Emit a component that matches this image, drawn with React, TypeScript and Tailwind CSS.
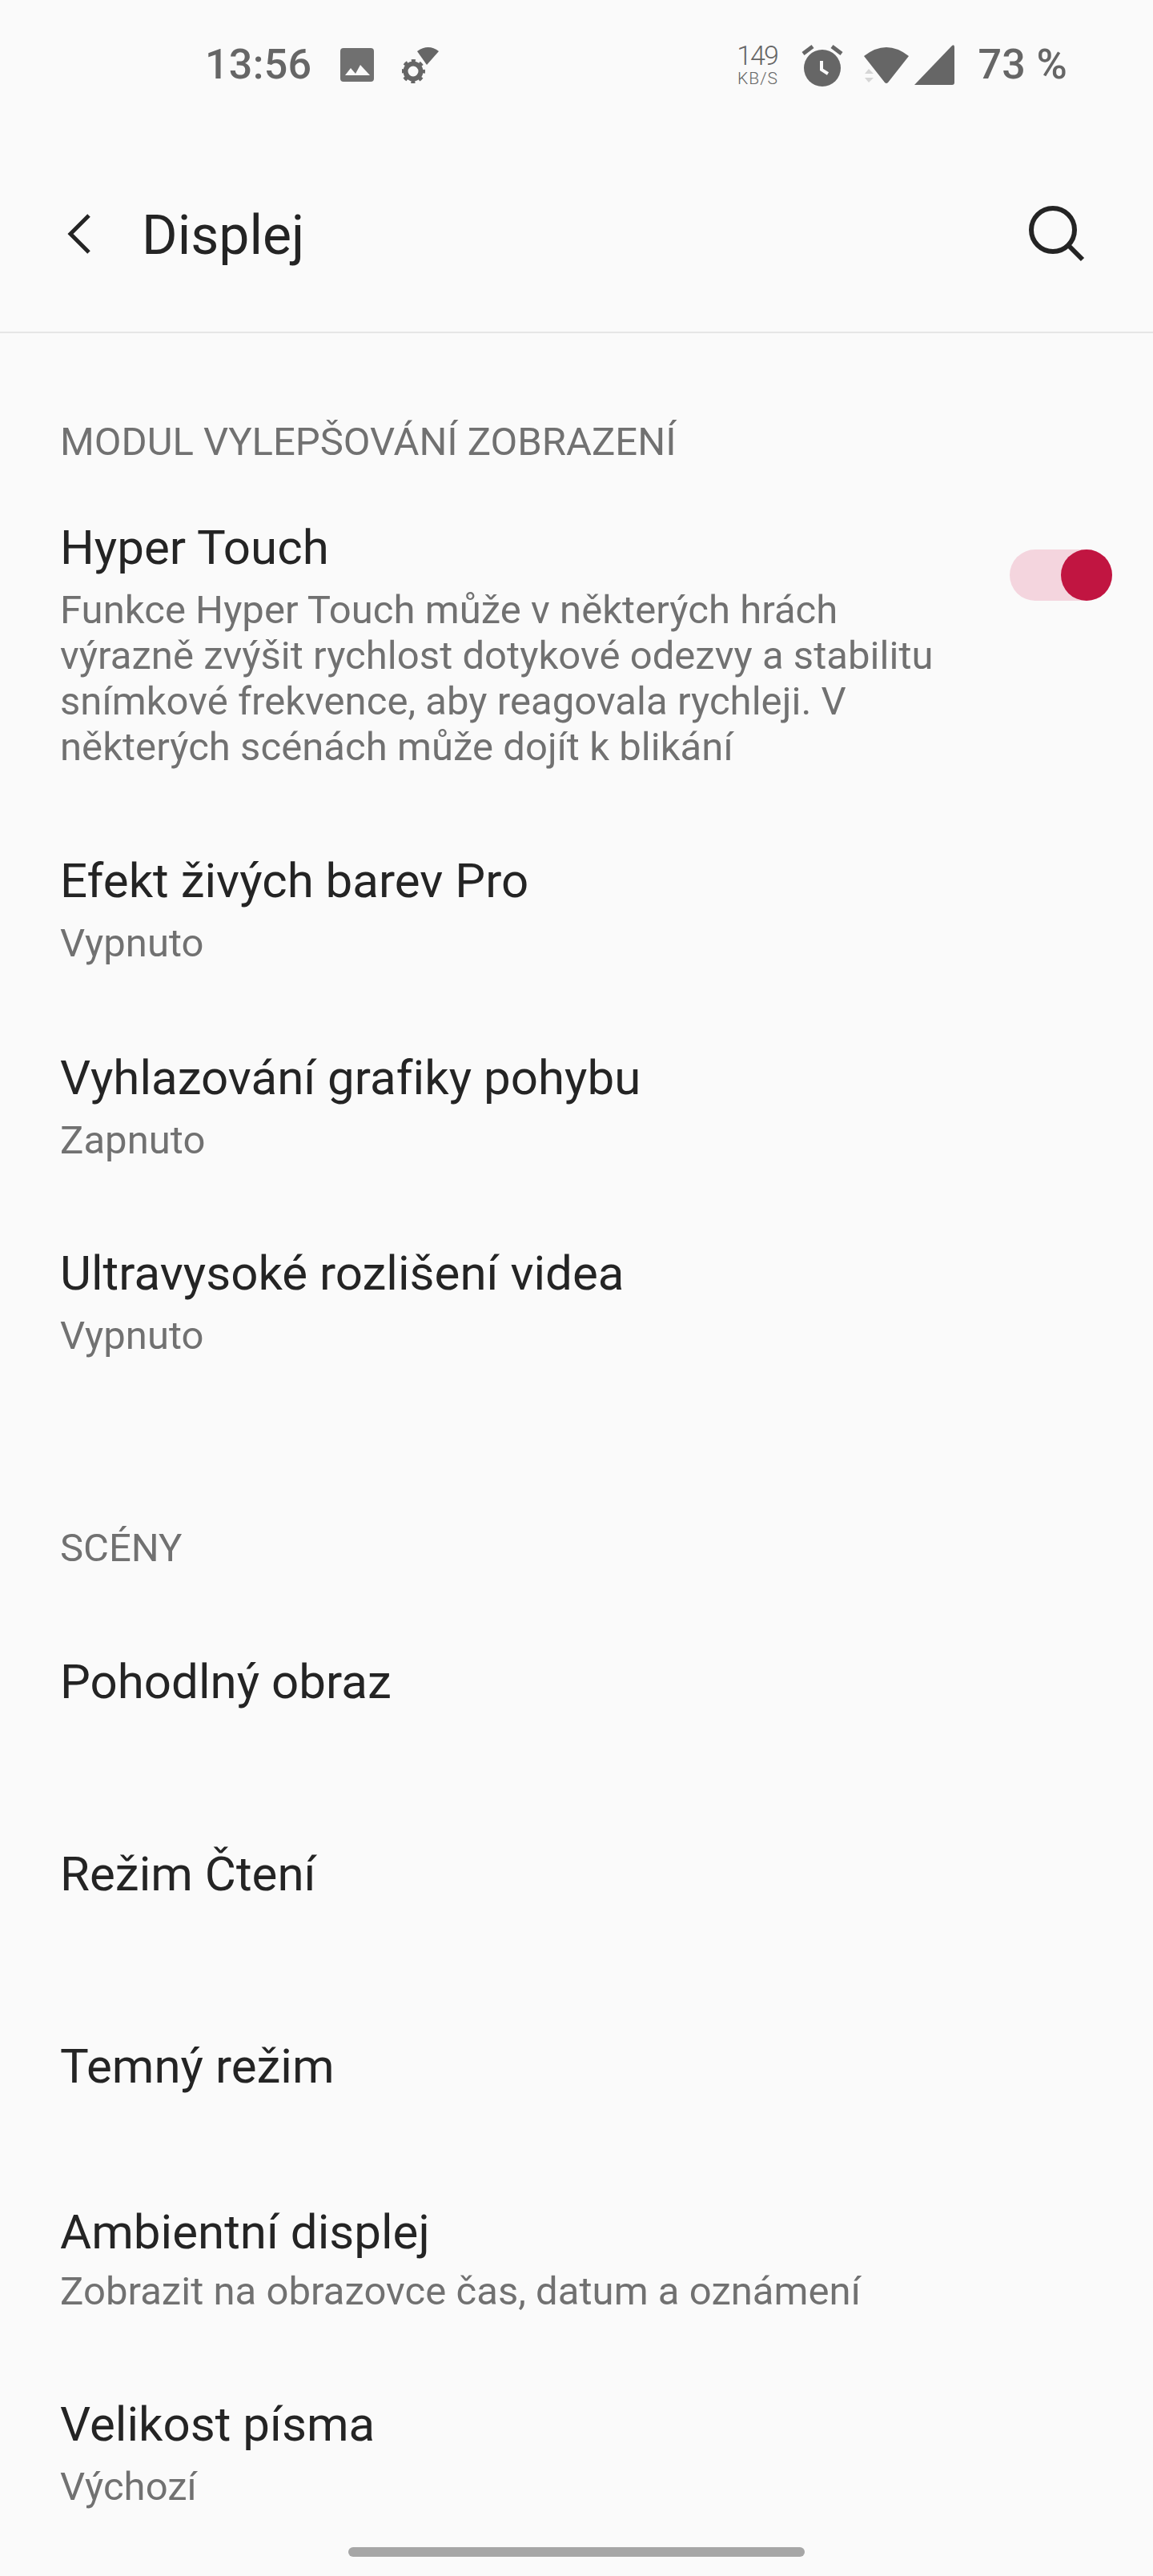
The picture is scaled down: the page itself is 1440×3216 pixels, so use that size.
import React from "react";

function Row({ title, sub, className, subClass = "mt-[13px]" }: { title: string; sub?: string; className: string; subClass?: string }) {
  return (
    <div className={className}>
      <div className="text-[60px] leading-[72px] tracking-[0.03px] text-[#242424]">{title}</div>
      {sub && <div className={`text-[49px] leading-[57px] tracking-[0.05px] text-[#717171] ${subClass}`}>{sub}</div>}
    </div>
  );
}

function Heading({ children, className }: { children: React.ReactNode; className: string }) {
  return <div className={`text-[49px] leading-[57px] text-[#717171] ${className}`}>{children}</div>;
}

export default function App() {
  return (
    <div className="relative w-[1440px] h-[3216px] overflow-hidden bg-[#fafafa] font-['Roboto',sans-serif]">
      {/* status bar */}
      <div className="flex h-[162px] items-center justify-between pl-[256px] pr-[107px] text-[#666666]">
        <div className="flex items-center">
          <span className="text-[52px] font-medium leading-none tracking-[0.3px]">13:56</span>
          <svg className="ml-[36px]" width="42" height="42" viewBox="0 0 42 42">
            <rect width="42" height="42" rx="4" fill="#707070" />
            <path d="M6 34 L13 25 L19 32 L25 21 L37 34 Z" fill="#fafafa" />
          </svg>
          <svg className="ml-[35px]" width="48" height="46" viewBox="0 0 48 46">
            <path d="M19 6 Q33 -4 46 6 L31 23 Z" fill="#666666" />
            <circle cx="14" cy="31" r="9.5" fill="none" stroke="#666666" strokeWidth="6" />
            <circle cx="14" cy="31" r="13" fill="none" stroke="#666666" strokeWidth="4" strokeDasharray="5 5.2" strokeDashoffset="2.5" />
          </svg>
        </div>
        <div className="flex items-center">
          <div className="flex w-[52px] flex-col items-center text-[#666666]">
            <span className="text-[34px] font-light leading-[34px] tracking-[-2px]">149</span>
            <span className="pl-[2px] text-[21px] font-light leading-[24px] tracking-[1px]">KB/S</span>
          </div>
          <svg className="ml-[29px]" width="54" height="54" viewBox="0 0 54 54">
            <circle cx="27" cy="31" r="23" fill="#666666" />
            <path d="M26 22 V33 L34 38" fill="none" stroke="#fafafa" strokeWidth="4" />
            <path d="M3 13 L15 4 M51 13 L39 4" stroke="#666666" strokeWidth="5" />
          </svg>
          <svg className="ml-[25px]" width="56" height="46" viewBox="0 0 56 46">
            <path d="M0 12 Q28 -10 56 12 L30 45 Q28 47 26 45 Z" fill="#666666" />
            <path d="M1 34 L6 28 L12 34 Z M1 39 L12 39 L6 45 Z" fill="#d6d6d6" />
          </svg>
          <svg className="ml-[7px]" width="50" height="50" viewBox="0 0 50 50">
            <path d="M0 50 L47 1 Q50 -1 50 3 V47 Q50 50 47 50 Z" fill="#666666" />
          </svg>
          <span className="ml-[29px] text-[52px] font-medium leading-none tracking-[0.3px]">73 %</span>
        </div>
      </div>

      {/* header */}
      <div className="flex h-[254px] items-center border-b-2 border-[#e6e6e6] pl-[84px] pr-[85px]">
        <svg className="mt-[7px]" width="30" height="50" viewBox="0 0 30 50">
          <path d="M27 2 L4 25 L27 48" fill="none" stroke="#242424" strokeWidth="5" />
        </svg>
        <span className="ml-[63px] mt-[12px] text-[68px] leading-[80px] text-[#242424]">Displej</span>
        <svg className="ml-auto mt-[6px]" width="72" height="72" viewBox="0 0 72 72">
          <circle cx="32" cy="32" r="27" fill="none" stroke="#242424" strokeWidth="6" />
          <path d="M50 50 L69 69" stroke="#242424" strokeWidth="6" />
        </svg>
      </div>

      {/* content */}
      <div className="px-[75px]">
        <Heading className="pt-[107px]">MODUL VYLEPŠOVÁNÍ ZOBRAZENÍ</Heading>

        <div className="mt-[68px] flex items-start justify-between">
          <div className="w-[1110px]">
            <div className="text-[60px] leading-[72px] tracking-[0.03px] text-[#242424]">Hyper Touch</div>
            <div className="mt-[13px] text-[49px] leading-[57px] tracking-[0.05px] text-[#717171]">
              Funkce Hyper Touch může v některých hrách výrazně zvýšit rychlost dotykové odezvy a stabilitu snímkové frekvence, aby reagovala rychleji. V některých scénách může dojít k blikání
            </div>
          </div>
          <div className="relative mr-[-24px] mt-[38px] h-[64px] w-[128px] rounded-full bg-[#f4d5de]">
            <div className="absolute right-0 top-0 h-[64px] w-[64px] rounded-full bg-[#c11541]" />
          </div>
        </div>

        <Row className="mt-[103px]" title="Efekt živých barev Pro" sub="Vypnuto" />
        <Row className="mt-[104px]" title="Vyhlazování grafiky pohybu" sub="Zapnuto" />
        <Row className="mt-[102px]" title="Ultravysoké rozlišení videa" sub="Vypnuto" />

        <Heading className="mt-[208px]">SCÉNY</Heading>

        <Row className="mt-[103px]" title="Pohodlný obraz" />
        <Row className="mt-[168px]" title="Režim Čtení" />
        <Row className="mt-[168px]" title="Temný režim" />
        <Row className="mt-[135px]" title="Ambientní displej" sub="Zobrazit na obrazovce čas, datum a oznámení" subClass="mt-[9px]" />
        <Row className="mt-[102px]" title="Velikost písma" sub="Výchozí" />
      </div>

      {/* gesture bar */}
      <div className="absolute bottom-[24px] left-[435px] h-[12px] w-[570px] rounded-full bg-[#a6a6a6]" />
    </div>
  );
}
